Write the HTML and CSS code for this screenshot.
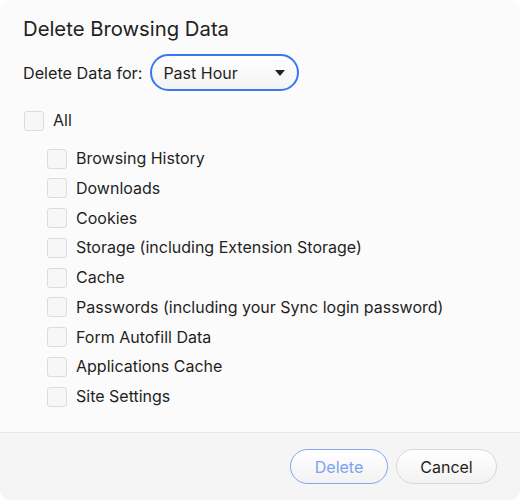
FILE: index.html
```html
<!DOCTYPE html>
<html>
<head>
<meta charset="utf-8">
<link rel="stylesheet" href="styles.css">
</head>
<body>
<div class="dialog">
  <div class="content">
    <h1 class="title">Delete Browsing Data</h1>
    <div class="range">
      <span class="range-label">Delete Data for:</span>
      <div class="select">
        <span>Past Hour</span>
        <svg class="caret" width="10" height="6" viewBox="0 0 10 6"><path d="M0 0H10L5 6Z" fill="#222"/></svg>
      </div>
    </div>
    <label class="check all"><span class="box"></span><span>All</span></label>
    <div class="items">
      <label class="check"><span class="box"></span><span>Browsing History</span></label>
      <label class="check"><span class="box"></span><span>Downloads</span></label>
      <label class="check"><span class="box"></span><span>Cookies</span></label>
      <label class="check"><span class="box"></span><span>Storage (including Extension Storage)</span></label>
      <label class="check"><span class="box"></span><span>Cache</span></label>
      <label class="check"><span class="box"></span><span>Passwords (including your Sync login password)</span></label>
      <label class="check"><span class="box"></span><span>Form Autofill Data</span></label>
      <label class="check"><span class="box"></span><span>Applications Cache</span></label>
      <label class="check"><span class="box"></span><span>Site Settings</span></label>
    </div>
  </div>
  <div class="footer">
    <button class="btn delete">Delete</button>
    <button class="btn cancel">Cancel</button>
  </div>
</div>
</body>
</html>
```
FILE: styles.css
```css
html, body {
  margin: 0;
  padding: 0;
  background: #ffffff;
}
body {
  font-family: Inter, "Liberation Sans", Arial, sans-serif;
  color: #1f1f1f;
}
.dialog {
  width: 520px;
  height: 500px;
  background: #fbfbfb;
  border-radius: 10px;
  overflow: hidden;
  display: flex;
  flex-direction: column;
}
.content {
  flex: 1;
  padding: 16px 23px 0 23px;
}
.title {
  margin: 0;
  font-size: 20.3px;
  font-weight: normal;
  line-height: 26px;
  color: #222;
}
.range {
  display: flex;
  align-items: center;
  margin-top: 12px;
  gap: 8px;
}
.range-label {
  font-size: 16.2px;
}
.select {
  box-sizing: border-box;
  border: 2px solid #3b78ef;
  border-radius: 19px;
  background: linear-gradient(#ffffff, #f4f4f4);
  display: flex;
  align-items: center;
  justify-content: space-between;
  padding: 0 12px 0 11px;
  font-size: 16px;
  width: 149px;
  height: 37px;
}
.caret {
  display: block;
}
.check {
  display: flex;
  align-items: center;
  gap: 9px;
  font-size: 16px;
  height: 29.75px;
}
.check > span:last-child {
  margin-top: -1px;
}
.box {
  width: 18px;
  height: 18px;
  border: 1px solid #dcdcdc;
  border-radius: 3px;
  background: #f7f7f7;
  flex: none;
}
.all {
  margin-top: 15px;
  margin-left: 1px;
}
.items {
  margin-top: 8px;
  padding-left: 24px;
}
.footer {
  height: 67px;
  border-top: 1px solid #e6e6e6;
  background: #f5f5f5;
  display: flex;
  justify-content: flex-end;
  align-items: center;
  gap: 8px;
  padding: 0 23px 0 0;
}
.btn {
  font-family: inherit;
  font-size: 16px;
  height: 35px;
  border-radius: 18px;
  padding: 0;
  background: linear-gradient(#ffffff, #f2f2f2);
}
.delete {
  width: 98px;
  border: 1px solid #7fa6f2;
  color: #7aa2f0;
}
.cancel {
  width: 101px;
  border: 1px solid #d8d8d8;
  color: #1f1f1f;
}
```
